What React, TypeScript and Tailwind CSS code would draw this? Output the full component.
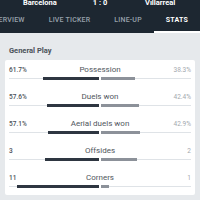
import React from "react";

type Stat = { label: string; home: string; away: string; h: number; a: number };

const stats: Stat[] = [
  { label: "Possession", home: "61.7%", away: "38.3%", h: 61.7, a: 38.3 },
  { label: "Duels won", home: "57.6%", away: "42.4%", h: 57.6, a: 42.4 },
  { label: "Aerial duels won", home: "57.1%", away: "42.9%", h: 57.1, a: 42.9 },
  { label: "Offsides", home: "3", away: "2", h: 3, a: 2 },
  { label: "Corners", home: "11", away: "1", h: 11, a: 1 },
];

const tabs = ["OVERVIEW", "LIVE TICKER", "LINE-UP", "STATS"];

function StatRow({ s }: { s: Stat }) {
  const total = s.h + s.a || 1;
  const hp = (s.h / total) * 100;
  const ap = (s.a / total) * 100;
  return (
    <div className="h-[27px] pt-[6px]">
      <div className="grid grid-cols-[1fr_auto_1fr] items-baseline leading-[8px]">
        <span className="text-[6.5px] text-[#4a5058] font-medium">{s.home}</span>
        <span className="text-[8px] text-[#50565d]">{s.label}</span>
        <span className="text-[6.5px] text-[#a3a8ae] text-right">{s.away}</span>
      </div>
      <div className="flex items-center gap-[2px] mt-[3px] h-[3px]">
        <div className="flex-1 flex items-center">
          <div className="flex-1 h-px bg-[#dfe3e7]" />
          <div className="h-[3px] bg-[#2e3641]" style={{ width: `${hp}%` }} />
        </div>
        <div className="flex-1 flex items-center">
          <div className="h-[3px] bg-[#8c9199]" style={{ width: `${ap}%` }} />
          <div className="flex-1 h-px bg-[#dfe3e7]" />
        </div>
      </div>
    </div>
  );
}

export default function App() {
  return (
    <div className="w-[200px] h-[200px] overflow-hidden bg-[#e6e9ec] font-['Roboto',sans-serif]">
      <div className="bg-[#1d2731]">
        <div className="h-[14px] -mt-[4px] grid grid-cols-3 items-center text-white font-bold text-[7.5px] leading-none">
          <span className="text-center pl-[13px]">Barcelona</span>
          <span className="text-center">1 : 0</span>
          <span className="text-center pr-[13px]">Villarreal</span>
        </div>
        <div className="flex justify-end overflow-hidden h-[23px]">
          {tabs.map((t) => (
            <div
              key={t}
              className={[
                "shrink-0 px-[12px] flex items-center text-[7px] tracking-[0.2px] leading-none border-b-2",
                t === "STATS" ? "text-white border-white font-bold" : "text-[#98a1ab] border-transparent font-medium",
              ].join(" ")}
            >
              {t}
            </div>
          ))}
        </div>
      </div>
      <div className="px-[5px]">
        <div className="h-[27px] flex items-center pl-[4px] pt-[8px] text-[7.5px] font-bold text-[#4a5159]">General Play</div>
        <div className="bg-white rounded-[2px] px-[4px]">
          {stats.map((s) => (
            <StatRow key={s.label} s={s} />
          ))}
        </div>
      </div>
    </div>
  );
}
